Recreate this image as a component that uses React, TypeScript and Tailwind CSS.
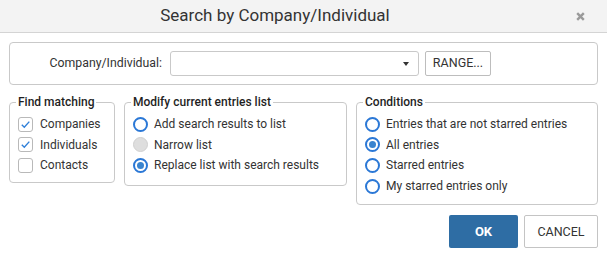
import React from "react";

const FONT = "font-['Roboto','Liberation_Sans',sans-serif]";

function CheckBox({ checked }: { checked?: boolean }) {
  return (
    <span className="flex h-[15px] w-[15px] shrink-0 items-center justify-center rounded-[3px] border border-[#b9b9b9] bg-white">
      {checked ? (
        <svg width="11" height="11" viewBox="0 0 11 11" aria-hidden>
          <path d="M1.8 5.8 L4.3 8.2 L9.3 2.6" fill="none" stroke="#2f7fd8" strokeWidth="1.4" />
        </svg>
      ) : null}
    </span>
  );
}

function Radio({ checked, disabled }: { checked?: boolean; disabled?: boolean }) {
  if (disabled)
    return <span className="h-[15px] w-[15px] shrink-0 rounded-full border border-[#d0d0d0] bg-[#dedede]" />;
  return (
    <span className="flex h-[15px] w-[15px] shrink-0 items-center justify-center rounded-full border-2 border-[#2b78d6] bg-white">
      {checked ? <span className="h-[7px] w-[7px] rounded-full bg-[#3a84cf]" /> : null}
    </span>
  );
}

function Group({ title, className, children }: { title: string; className: string; children: React.ReactNode }) {
  return (
    <fieldset className={`rounded-[4px] border border-[#c9c9c9] px-[6px] ${className}`}>
      <legend className="px-[2px] text-[12px] font-medium leading-[15px] text-[#1f1f1f]">{title}</legend>
      {children}
    </fieldset>
  );
}

function Row({ children, label, gap = "gap-[7px]" }: { children: React.ReactNode; label: string; gap?: string }) {
  return (
    <label className={`flex h-[20.6px] items-center pl-[2px] ${gap}`}>
      {children}
      <span>{label}</span>
    </label>
  );
}

export default function App() {
  return (
    <div className={`h-[260px] w-[607px] bg-white text-[12px] text-[#333] ${FONT}`}>
      <div className="relative flex h-[33px] items-center justify-center border-b border-[#d4d4d4] bg-[#f3f3f3] pr-[57px]">
        <span className="text-[17px] text-[#333]">Search by Company/Individual</span>
        <button type="button" aria-label="Close" className="absolute right-[22px] top-[12px]">
          <svg width="9" height="9" viewBox="0 0 9 9" aria-hidden>
            <path d="M1.2 1.2 L7.8 7.8 M7.8 1.2 L1.2 7.8" stroke="#9a9a9a" strokeWidth="2.4" />
          </svg>
        </button>
      </div>

      <div className="px-[9px] pt-[9px]">
        <div className="flex h-[43px] items-center rounded-[4px] border border-[#c9c9c9]">
          <span className="w-[152px] text-right text-[12.3px] text-[#333]">Company/Individual:</span>
          <div className="relative ml-[8px] h-[25px] w-[249px] rounded-[3px] border border-[#c9c9c9] bg-white">
            <span className="absolute right-[9px] top-[10px] h-0 w-0 border-x-[3px] border-t-[4px] border-x-transparent border-t-[#333]" />
          </div>
          <button
            type="button"
            className="ml-[6px] h-[25px] w-[66px] rounded-[2px] border border-[#bdbdbd] bg-white text-[12.5px] text-[#333]"
          >
            RANGE...
          </button>
        </div>

        <div className="mt-[10px] flex items-start">
          <Group title="Find matching" className="w-[106px] pb-[6px] pt-[4px]">
            <Row label="Companies">
              <CheckBox checked />
            </Row>
            <Row label="Individuals">
              <CheckBox checked />
            </Row>
            <Row label="Contacts">
              <CheckBox />
            </Row>
          </Group>

          <Group title="Modify current entries list" className="ml-[9px] w-[223px] pb-[9px] pt-[4px]">
            <Row label="Add search results to list" gap="gap-[6px]">
              <Radio />
            </Row>
            <Row label="Narrow list" gap="gap-[6px]">
              <Radio disabled />
            </Row>
            <Row label="Replace list with search results" gap="gap-[6px]">
              <Radio checked />
            </Row>
          </Group>

          <div className="ml-auto flex flex-col items-end">
            <Group title="Conditions" className="w-[242px] pb-[8px] pt-[4px]">
              <Row label="Entries that are not starred entries" gap="gap-[6px]">
                <Radio />
              </Row>
              <Row label="All entries" gap="gap-[6px]">
                <Radio checked />
              </Row>
              <Row label="Starred entries" gap="gap-[6px]">
                <Radio />
              </Row>
              <Row label="My starred entries only" gap="gap-[6px]">
                <Radio />
              </Row>
            </Group>
            <div className="mt-[10px] flex gap-[6px]">
              <button
                type="button"
                className="h-[33px] w-[69px] rounded-[2px] bg-[#2e6da4] text-[13px] font-bold text-white"
              >
                OK
              </button>
              <button
                type="button"
                className="h-[33px] w-[74px] rounded-[2px] border border-[#c4c4c4] bg-white text-[12.5px] text-[#333]"
              >
                CANCEL
              </button>
            </div>
          </div>
        </div>
      </div>
    </div>
  );
}
